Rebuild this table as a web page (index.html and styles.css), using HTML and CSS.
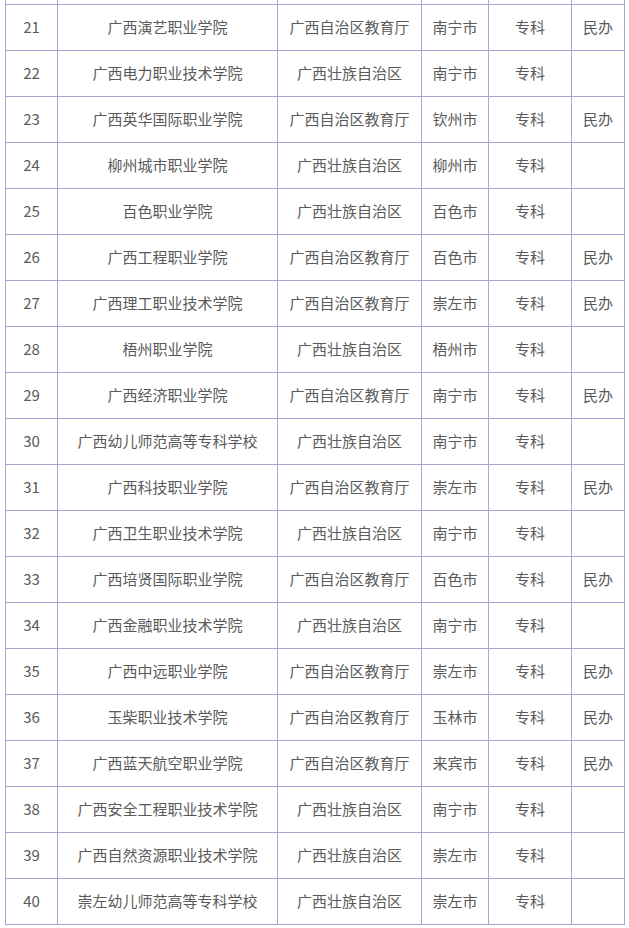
FILE: index.html
```html
<!DOCTYPE html>
<html lang="zh">
<head>
<meta charset="utf-8">
<link rel="stylesheet" href="styles.css">
</head>
<body>
<div class="wrap">
<table class="list">
<colgroup>
<col class="c1"><col class="c2"><col class="c3"><col class="c4"><col class="c5"><col class="c6">
</colgroup>
<tbody>
<tr class="partial"><td></td><td></td><td></td><td></td><td></td><td></td></tr>
<tr><td>21</td><td>广西演艺职业学院</td><td>广西自治区教育厅</td><td>南宁市</td><td>专科</td><td>民办</td></tr>
<tr><td>22</td><td>广西电力职业技术学院</td><td>广西壮族自治区</td><td>南宁市</td><td>专科</td><td></td></tr>
<tr><td>23</td><td>广西英华国际职业学院</td><td>广西自治区教育厅</td><td>钦州市</td><td>专科</td><td>民办</td></tr>
<tr><td>24</td><td>柳州城市职业学院</td><td>广西壮族自治区</td><td>柳州市</td><td>专科</td><td></td></tr>
<tr><td>25</td><td>百色职业学院</td><td>广西壮族自治区</td><td>百色市</td><td>专科</td><td></td></tr>
<tr><td>26</td><td>广西工程职业学院</td><td>广西自治区教育厅</td><td>百色市</td><td>专科</td><td>民办</td></tr>
<tr><td>27</td><td>广西理工职业技术学院</td><td>广西自治区教育厅</td><td>崇左市</td><td>专科</td><td>民办</td></tr>
<tr><td>28</td><td>梧州职业学院</td><td>广西壮族自治区</td><td>梧州市</td><td>专科</td><td></td></tr>
<tr><td>29</td><td>广西经济职业学院</td><td>广西自治区教育厅</td><td>南宁市</td><td>专科</td><td>民办</td></tr>
<tr><td>30</td><td>广西幼儿师范高等专科学校</td><td>广西壮族自治区</td><td>南宁市</td><td>专科</td><td></td></tr>
<tr><td>31</td><td>广西科技职业学院</td><td>广西自治区教育厅</td><td>崇左市</td><td>专科</td><td>民办</td></tr>
<tr><td>32</td><td>广西卫生职业技术学院</td><td>广西壮族自治区</td><td>南宁市</td><td>专科</td><td></td></tr>
<tr><td>33</td><td>广西培贤国际职业学院</td><td>广西自治区教育厅</td><td>百色市</td><td>专科</td><td>民办</td></tr>
<tr><td>34</td><td>广西金融职业技术学院</td><td>广西壮族自治区</td><td>南宁市</td><td>专科</td><td></td></tr>
<tr><td>35</td><td>广西中远职业学院</td><td>广西自治区教育厅</td><td>崇左市</td><td>专科</td><td>民办</td></tr>
<tr><td>36</td><td>玉柴职业技术学院</td><td>广西自治区教育厅</td><td>玉林市</td><td>专科</td><td>民办</td></tr>
<tr><td>37</td><td>广西蓝天航空职业学院</td><td>广西自治区教育厅</td><td>来宾市</td><td>专科</td><td>民办</td></tr>
<tr><td>38</td><td>广西安全工程职业技术学院</td><td>广西壮族自治区</td><td>南宁市</td><td>专科</td><td></td></tr>
<tr><td>39</td><td>广西自然资源职业技术学院</td><td>广西壮族自治区</td><td>崇左市</td><td>专科</td><td></td></tr>
<tr><td>40</td><td>崇左幼儿师范高等专科学校</td><td>广西壮族自治区</td><td>崇左市</td><td>专科</td><td></td></tr>
</tbody>
</table>
</div>
</body>
</html>
```
FILE: styles.css
```css
html, body {
  margin: 0;
  padding: 0;
  background: #ffffff;
}
.wrap {
  padding-left: 5px;
  overflow: hidden;
  height: 928px;
}
.list {
  border-collapse: collapse;
  table-layout: fixed;
  width: 620px;
  margin-top: -42px;
  font-family: "Noto Sans CJK SC", "Noto Sans", sans-serif;
  font-size: 15px;
  color: #5a5a5a;
}
.c1 { width: 52px; }
.c2 { width: 220px; }
.c3 { width: 144px; }
.c4 { width: 67px; }
.c5 { width: 83px; }
.c6 { width: 53px; }
.list td {
  border: 1px solid #aaa3d2;
  height: 43px;
  padding: 0 0 2px 0;
  text-align: center;
  vertical-align: middle;
  line-height: 20px;
  white-space: nowrap;
}
```
